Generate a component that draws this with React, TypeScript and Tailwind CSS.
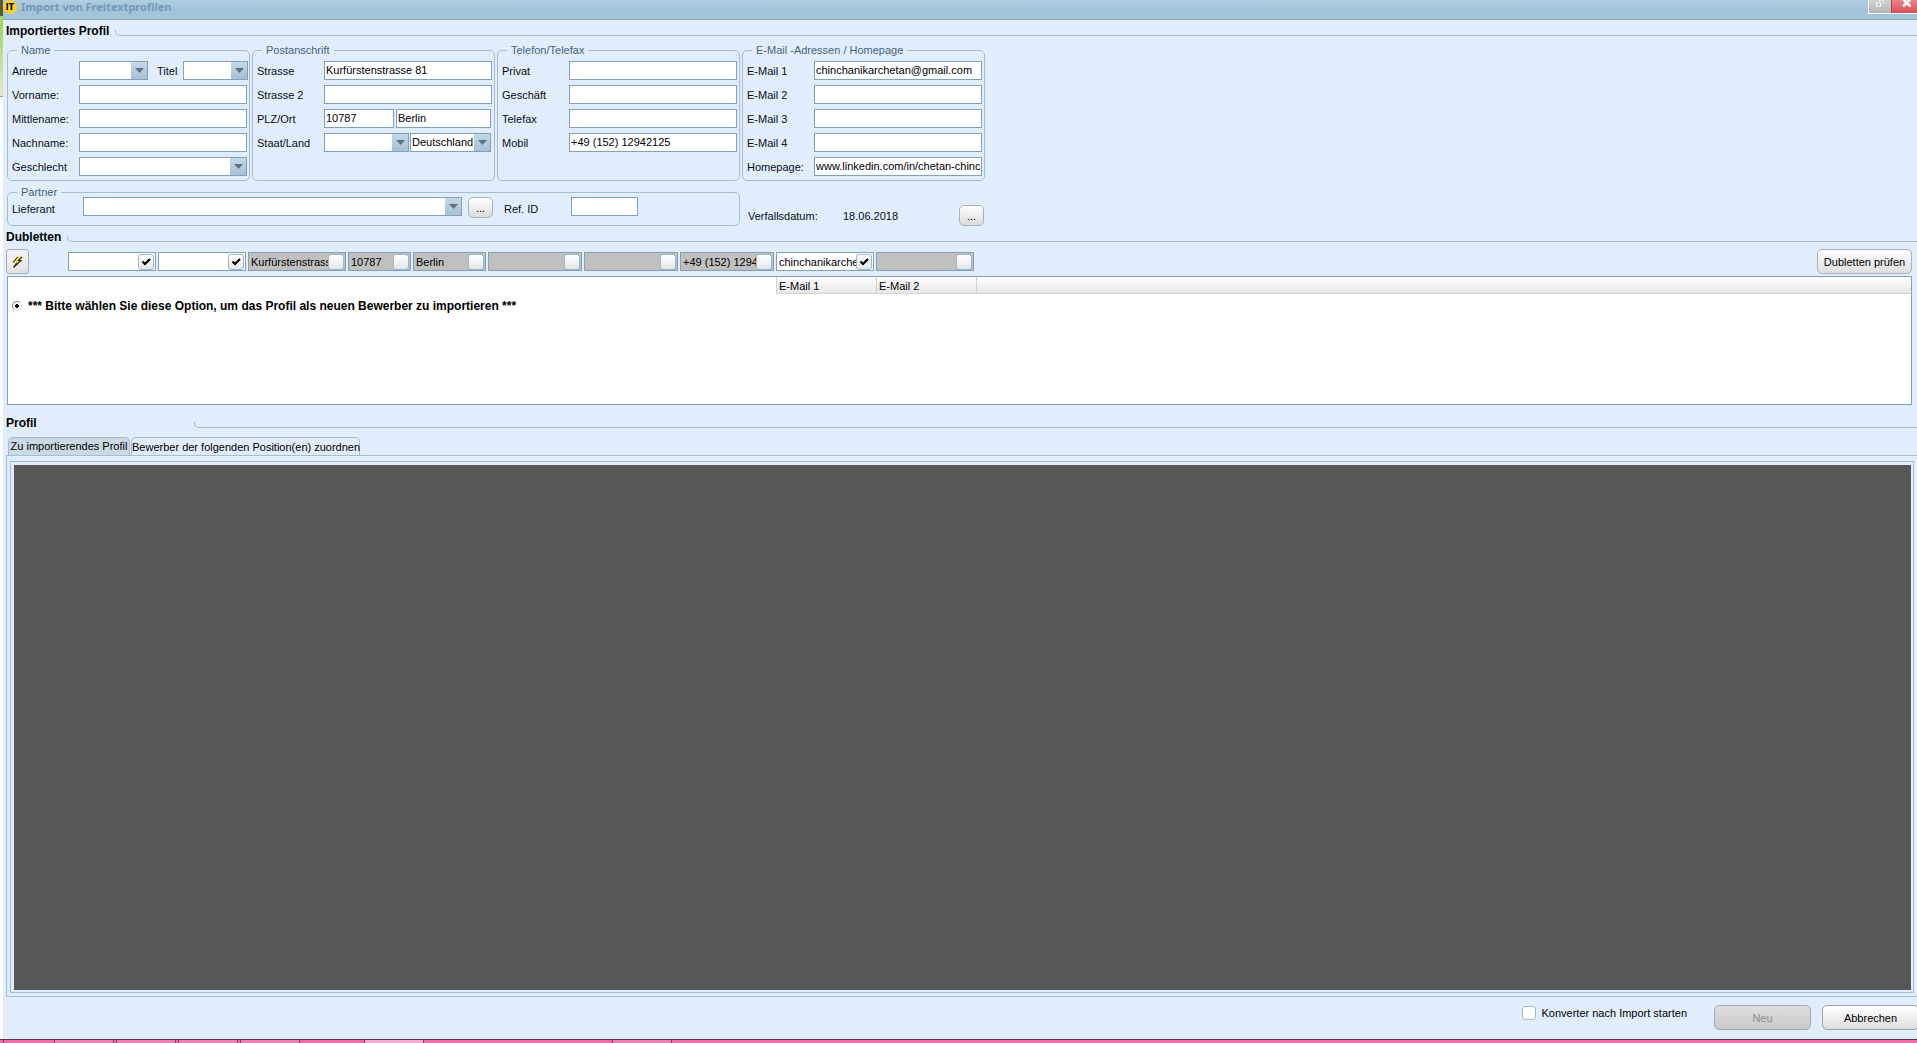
import React, { useId } from "react";

function Field({ id, value = "", className = "w-[168px]", label }: { id?: string; value?: string; className?: string; label?: string }) {
  return (
    <input
      id={id}
      type="text"
      aria-label={label}
      defaultValue={value}
      className={`h-[19px] min-w-0 border border-[#84a0ba] bg-white px-px pb-px text-black outline-none ${className}`}
    />
  );
}

function Select({ id, value = "", className = "w-[168px]", label }: { id?: string; value?: string; className?: string; label?: string }) {
  return (
    <div className={`relative h-[19px] border border-[#84a0ba] bg-white ${className}`}>
      <select id={id} aria-label={label} className="block h-full w-full appearance-none bg-transparent pl-px pr-4 pb-px text-black outline-none">
        <option>{value}</option>
      </select>
      <span className="pointer-events-none absolute inset-y-0 right-0 flex w-4 items-center justify-center bg-gradient-to-b from-[#c3d9e8] to-[#a5c0d4]">
        <svg width="9" height="5" viewBox="0 0 9 5" aria-hidden="true">
          <path d="M0 0h9L4.5 5z" fill="#5c7482" />
        </svg>
      </span>
    </div>
  );
}

function Row({ label, children, value }: { label: string; children?: (id: string) => React.ReactNode; value?: string }) {
  const id = useId();
  return (
    <div className="flex h-[19px] items-center">
      <label htmlFor={id} className="w-[67px] shrink-0 pt-px">{label}</label>
      {children ? children(id) : <Field id={id} value={value} />}
    </div>
  );
}

function Group({ title, children }: { title: string; children: React.ReactNode }) {
  return (
    <fieldset className="w-[243px] rounded-[5px] border border-[#a5bdd3] pl-1">
      <legend className="ml-[5px] px-1 leading-[14px] text-[#44667f]">{title}</legend>
      <div className="flex flex-col gap-[5px] pb-1 pt-1">{children}</div>
    </fieldset>
  );
}

function SectionTitle({ title, className = "gap-[6px]" }: { title: string; className?: string }) {
  return (
    <div className={`flex h-4 items-center ${className}`}>
      <h2 className="text-[12px] font-bold leading-4 text-black">{title}</h2>
      <span className="mb-[3px] h-[6px] flex-1 self-end rounded-bl-[5px] border-b border-l border-[#a5bdd3]" />
    </div>
  );
}

function DotsButton({ label }: { label: string }) {
  return (
    <button aria-label={label} className="h-[21px] w-[25px] rounded-[5px] border border-[#a9b2ba] bg-gradient-to-b from-white to-[#dcdcdc] text-black">
      ...
    </button>
  );
}

const duplicateFields = [
  { label: "Vorname", value: "", on: true, width: "w-[88px]" },
  { label: "Nachname", value: "", on: true, width: "w-[88px]" },
  { label: "Strasse", value: "Kurfürstenstrasse 81", on: false, width: "w-[98px]" },
  { label: "PLZ", value: "10787", on: false, width: "w-[63px]" },
  { label: "Ort", value: "Berlin", on: false, width: "w-[73px]" },
  { label: "Privat", value: "", on: false, width: "w-[94px]" },
  { label: "Geschäft", value: "", on: false, width: "w-[94px]" },
  { label: "Mobil", value: "+49 (152) 12942125", on: false, width: "w-[94px]" },
  { label: "E-Mail 1", value: "chinchanikarchetan@gmail.com", on: true, width: "w-[98px]" },
  { label: "E-Mail 2", value: "", on: false, width: "w-[98px]" },
];

function DuplicateField({ label, value, on, width }: (typeof duplicateFields)[number]) {
  return (
    <div className={`flex h-[19px] items-center border border-[#84a0ba] pr-px ${on ? "bg-white" : "bg-[#c0c0c0]"} ${width}`}>
      <input type="text" aria-label={label} defaultValue={value} className="h-full w-0 flex-1 bg-transparent pl-[2px] text-black outline-none" />
      <span className="relative h-4 w-4">
        <input
          type="checkbox"
          aria-label={`${label} prüfen`}
          defaultChecked={on}
          className="peer block h-4 w-4 appearance-none rounded-[3px] border border-[#9fb6ca] bg-gradient-to-b from-white to-[#e4e6ea]"
        />
        <svg className="pointer-events-none absolute inset-0 hidden peer-checked:block" width="16" height="16" viewBox="0 0 16 16" aria-hidden="true">
          <path d="M4.5 7.5L7 10l5-5" fill="none" stroke="#000" strokeWidth="2.2" />
        </svg>
      </span>
    </div>
  );
}

const taskbar = [
  { width: "w-[4px]", tone: "bg-[#f768a8]" },
  { width: "w-[51px]", tone: "bg-[#f768a8]" },
  { width: "w-[59px]", tone: "bg-[#f57db6]" },
  { width: "w-[3px]", tone: "bg-[#f768a8]" },
  { width: "w-[59px]", tone: "bg-[#f57db6]" },
  { width: "w-[3px]", tone: "bg-[#f768a8]" },
  { width: "w-[59px]", tone: "bg-[#f57db6]" },
  { width: "w-[3px]", tone: "bg-[#f768a8]" },
  { width: "w-[59px]", tone: "bg-[#f57db6]" },
  { width: "w-[65px]", tone: "bg-[#f768a8]" },
  { width: "w-[59px]", tone: "bg-[#f9a8cf]" },
  { width: "w-[189px]", tone: "bg-[#f768a8]" },
  { width: "w-[59px]", tone: "bg-[#f57db6]" },
];

export default function App() {
  return (
    <div className="flex h-screen flex-col overflow-hidden font-['Liberation_Sans',sans-serif] text-[11px] leading-[14px] text-[#0a0f18]">
      <div className="flex min-h-0 flex-1">
        <div className="flex w-[3px] shrink-0 flex-col" aria-hidden="true">
          <div className="h-4 bg-[#5a5a30]" />
          <div className="h-4 bg-[#a8d860]" />
          <div className="h-16 bg-gradient-to-b from-[#a5d86a] to-[#e8e6cf]" />
          <div className="flex-1 border-t border-[#b0a070] bg-[#fbfcfd]" />
        </div>
        <main className="flex min-w-0 flex-1 flex-col bg-[#e1edfb]">
          <header className="flex h-5 shrink-0 justify-between border-b border-[#86a5be] bg-gradient-to-b from-[#b0cde2] to-[#a3c4d8] to-50%">
            <div className="flex h-[13px] items-center gap-[4px]">
              <span className="flex h-[14px] w-[14px] items-center justify-center rounded-full bg-[#fbd22a] font-['Roboto',sans-serif] text-[9px] font-black leading-3 text-black">IT</span>
              <h1 className="font-['Noto_Sans',sans-serif] text-[11px] font-bold leading-[14px] text-[#7599b8]">Import von Freitextprofilen</h1>
            </div>
            <div className="flex h-[14px] border-b border-l border-white">
              <button aria-label="Wiederherstellen" className="flex w-[22px] justify-center bg-gradient-to-b from-[#d0d2d2] to-[#b4b8ba]">
                <svg width="12" height="8" viewBox="0 0 12 8" fill="none" stroke="#f2f2f2" aria-hidden="true">
                  <path d="M2.5 2.5h4v4h-4z" />
                  <path d="M5 0.500h4.500v3H8.500" strokeDasharray="2 1" />
                </svg>
              </button>
              <button aria-label="Schließen" className="flex w-[26px] items-start justify-center border-l border-[#a84850] bg-gradient-to-b from-[#ec8088] to-[#dc5058] pl-1">
                <svg width="12" height="8" viewBox="0 0 12 8" aria-hidden="true">
                  <path d="M2-1L9.500 6.500M9.500-1L2 6.500" stroke="#fff" strokeWidth="2.500" />
                </svg>
              </button>
            </div>
          </header>

          <div className="pl-[3px] pt-[3px]">
            <SectionTitle title="Importiertes Profil" />
          </div>

          <section className="flex flex-wrap gap-[2px] pl-1 pt-1">
            <Group title="Name">
              <Row label="Anrede">
                {(id) => (
                  <>
                    <Select id={id} className="w-[69px]" />
                    <label htmlFor="titel" className="w-[35px] pl-[9px] pt-px">Titel</label>
                    <Select id="titel" className="w-[65px]" />
                  </>
                )}
              </Row>
              <Row label="Vorname:" />
              <Row label="Mittlename:" />
              <Row label="Nachname:" />
              <Row label="Geschlecht">{(id) => <Select id={id} />}</Row>
            </Group>
            <Group title="Postanschrift">
              <Row label="Strasse" value="Kurfürstenstrasse 81" />
              <Row label="Strasse 2" />
              <Row label="PLZ/Ort">
                {(id) => (
                  <div className="flex gap-[2px]">
                    <Field id={id} value="10787" className="w-[70px]" />
                    <Field label="Ort" value="Berlin" className="w-[95px]" />
                  </div>
                )}
              </Row>
              <Row label="Staat/Land">
                {(id) => (
                  <div className="flex gap-px">
                    <Select id={id} className="w-[85px]" />
                    <Select label="Land" value="Deutschland" className="w-[81px]" />
                  </div>
                )}
              </Row>
            </Group>
            <Group title="Telefon/Telefax">
              <Row label="Privat" />
              <Row label="Geschäft" />
              <Row label="Telefax" />
              <Row label="Mobil" value="+49 (152) 12942125" />
            </Group>
            <Group title="E-Mail -Adressen / Homepage">
              <Row label="E-Mail 1" value="chinchanikarchetan@gmail.com" />
              <Row label="E-Mail 2" />
              <Row label="E-Mail 3" />
              <Row label="E-Mail 4" />
              <Row label="Homepage:" value="www.linkedin.com/in/chetan-chinchanikar" />
            </Group>
          </section>

          <section className="flex items-end pl-1 pt-1">
            <fieldset className="w-[733px] rounded-[5px] border border-[#a5bdd3] pl-1">
              <legend className="ml-[5px] px-1 leading-[14px] text-[#44667f]">Partner</legend>
              <div className="-mt-[2px] flex h-7 items-start">
                <label htmlFor="lieferant" className="w-[71px] pt-[5px]">Lieferant</label>
                <Select id="lieferant" className="w-[379px]" />
                <div className="pl-[6px]"><DotsButton label="Lieferant auswählen" /></div>
                <label htmlFor="refid" className="w-[78px] pl-[11px] pt-[5px]">Ref. ID</label>
                <Field id="refid" className="w-[67px]" />
              </div>
            </fieldset>
            <div className="flex items-center pl-2">
              <span className="w-[95px]">Verfallsdatum:</span>
              <span className="w-[116px]">18.06.2018</span>
              <DotsButton label="Verfallsdatum auswählen" />
            </div>
          </section>

          <div className="pl-[3px] pt-[3px]">
            <SectionTitle title="Dubletten" />
          </div>

          <section className="flex items-center pl-[3px] pr-[5px] pt-1">
            <button aria-label="Dubletten suchen" className="flex h-[25px] w-[23px] items-center justify-center rounded-[3px] border border-[#a3aeb8] bg-gradient-to-b from-[#f4f4f4] to-[#e2e2e2]">
              <svg width="13" height="14" viewBox="0 0 13 14" aria-hidden="true">
                <path d="M7 1.500L2 7.500h3.500L2.500 12 10 6H6.500L11 1.500z" fill="#f5df45" />
                <path d="M6.500 2L2 7.500M11 2L7.500 5.500H10L2.500 12.500L5.500 8" fill="none" stroke="#2c2808" strokeWidth="1.100" />
              </svg>
            </button>
            <div className="flex gap-[2px] pl-[39px]">
              {duplicateFields.map((f) => (
                <DuplicateField key={f.label} {...f} />
              ))}
            </div>
            <button className="ml-auto h-[25px] w-[95px] rounded-[5px] border border-[#a9b2ba] bg-gradient-to-b from-white to-[#dedede] text-black">Dubletten prüfen</button>
          </section>

          <section className="ml-1 mr-[5px] mt-[2px] h-[129px] shrink-0 border border-[#84a0ba] bg-white">
            <div className="ml-[768px] flex h-[17px] border-b border-l border-[#d4d4d4] bg-gradient-to-b from-white to-[#e6e6e6] text-black">
              <span className="w-[100px] border-r border-[#d0d0d0] pl-[2px] pt-[2px]">E-Mail 1</span>
              <span className="w-[100px] border-r border-[#d0d0d0] pl-[2px] pt-[2px]">E-Mail 2</span>
            </div>
            <label className="flex items-center gap-[6px] pl-1 pt-1 text-[12px] font-bold leading-4 text-black">
              <input type="radio" name="ziel" defaultChecked className="h-[10px] w-[10px] appearance-none rounded-full border border-[#8a8a8a] border-b-[#e4e4e4] border-r-[#e4e4e4] bg-[radial-gradient(circle,#000_2px,#fff_2px)]" />
              *** Bitte wählen Sie diese Option, um das Profil als neuen Bewerber zu importieren ***
            </label>
          </section>

          <div className="pl-[3px] pt-[10px]">
            <SectionTitle title="Profil" className="gap-[157px]" />
          </div>

          <div role="tablist" className="flex gap-px pl-[5px] pt-[6px]">
            <button role="tab" aria-selected="true" className="h-[18px] w-[122px] whitespace-nowrap rounded-t-[5px] border border-b-0 border-[#a5bdd3] bg-[#cbd9e2] pb-[2px] text-black">Zu importierendes Profil</button>
            <button role="tab" aria-selected="false" className="h-[18px] w-[229px] whitespace-nowrap rounded-t-[5px] border border-b-0 border-[#a5bdd3] bg-[#e1edfb] text-black">Bewerber der folgenden Position(en) zuordnen</button>
          </div>

          <div className="ml-[3px] flex min-h-0 flex-1 border border-r-0 border-[#a5bdd3] p-[3px] pt-[5px]">
            <div className="flex-1 border border-[#a5bdd3] p-[3px] pb-[2px] pr-[2px]">
              <div className="h-full bg-[#575757]" />
            </div>
          </div>

          <footer className="flex h-[42px] shrink-0 items-start justify-end overflow-hidden pt-2">
            <label className="flex items-center gap-[5px] pt-px text-black">
              <input type="checkbox" className="h-[14px] w-[14px] appearance-none rounded-[3px] border border-[#a3b8cb] bg-white" />
              Konverter nach Import starten
            </label>
            <button disabled className="ml-[27px] h-[25px] w-[97px] rounded-[5px] border border-[#a3a9b0] bg-gradient-to-b from-[#dedede] to-[#cacaca] text-[#8c8c8c]">Neu</button>
            <button className="-mr-[2px] ml-[11px] h-[25px] w-[97px] rounded-[5px] border border-[#9aa4ae] bg-gradient-to-b from-white to-[#dedede] text-black">Abbrechen</button>
          </footer>
        </main>
      </div>
      <div className="flex h-1 shrink-0 border-t border-[#4a4048] bg-[#f768a8]" aria-hidden="true">
        {taskbar.map((t, i) => (
          <div key={i} className={`h-full border-r border-[#8a4068] ${t.width} ${t.tone}`} />
        ))}
      </div>
    </div>
  );
}
